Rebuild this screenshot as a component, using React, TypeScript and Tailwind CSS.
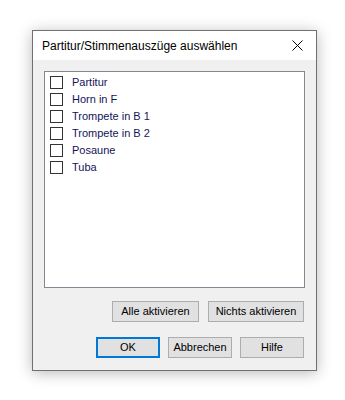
import React from "react";

const items = ["Partitur", "Horn in F", "Trompete in B 1", "Trompete in B 2", "Posaune", "Tuba"];

function Btn({ label, w, def }: { label: string; w: string; def?: boolean }) {
  return (
    <div
      className={`${w} h-[21px] flex items-center justify-center bg-[#e1e1e1] text-[11px] text-black ${
        def ? "border-2 border-[#0078d7]" : "border border-[#adadad]"
      }`}
    >
      {label}
    </div>
  );
}

export default function App() {
  return (
    <div
      className="w-[345px] h-[400px] bg-white pt-[30px] pl-[32px]"
      style={{ fontFamily: '"Liberation Sans", Arial, sans-serif' }}
    >
      <div className="w-[285px] h-[341px] border border-[#707070] bg-[#f0f0f0] flex flex-col shadow-[0_2px_14px_rgba(0,0,0,0.28)]">
        <div className="h-[29px] bg-white flex items-center justify-between pl-[9px] pr-[13px]">
          <span className="text-[12px] text-black">Partitur/Stimmenauszüge auswählen</span>
          <svg width="11" height="11" viewBox="0 0 11 11">
            <path d="M0.5 0.5 L10.5 10.5 M10.5 0.5 L0.5 10.5" stroke="#000" strokeWidth="1" />
          </svg>
        </div>
        <div className="flex flex-col pl-[11px] pr-[11px] pt-[11px]">
          <div className="w-[261px] h-[217px] border border-[#828790] bg-white pt-[4px] pl-[5px] flex flex-col">
            {items.map((it) => (
              <div key={it} className="h-[17px] flex items-start gap-[9px]">
                <div className="w-[13px] h-[13px] border border-[#333333] bg-white" />
                <span className="text-[11px] leading-[13px] text-[#14145a]">{it}</span>
              </div>
            ))}
          </div>
          <div className="flex justify-end gap-[9px] mt-[13px] pr-[1px]">
            <Btn label="Alle aktivieren" w="w-[87px]" />
            <Btn label="Nichts aktivieren" w="w-[96px]" />
          </div>
          <div className="flex justify-end gap-[8px] mt-[15px] pr-[1px]">
            <Btn label="OK" w="w-[64px]" def />
            <Btn label="Abbrechen" w="w-[64px]" />
            <Btn label="Hilfe" w="w-[64px]" />
          </div>
        </div>
      </div>
    </div>
  );
}
